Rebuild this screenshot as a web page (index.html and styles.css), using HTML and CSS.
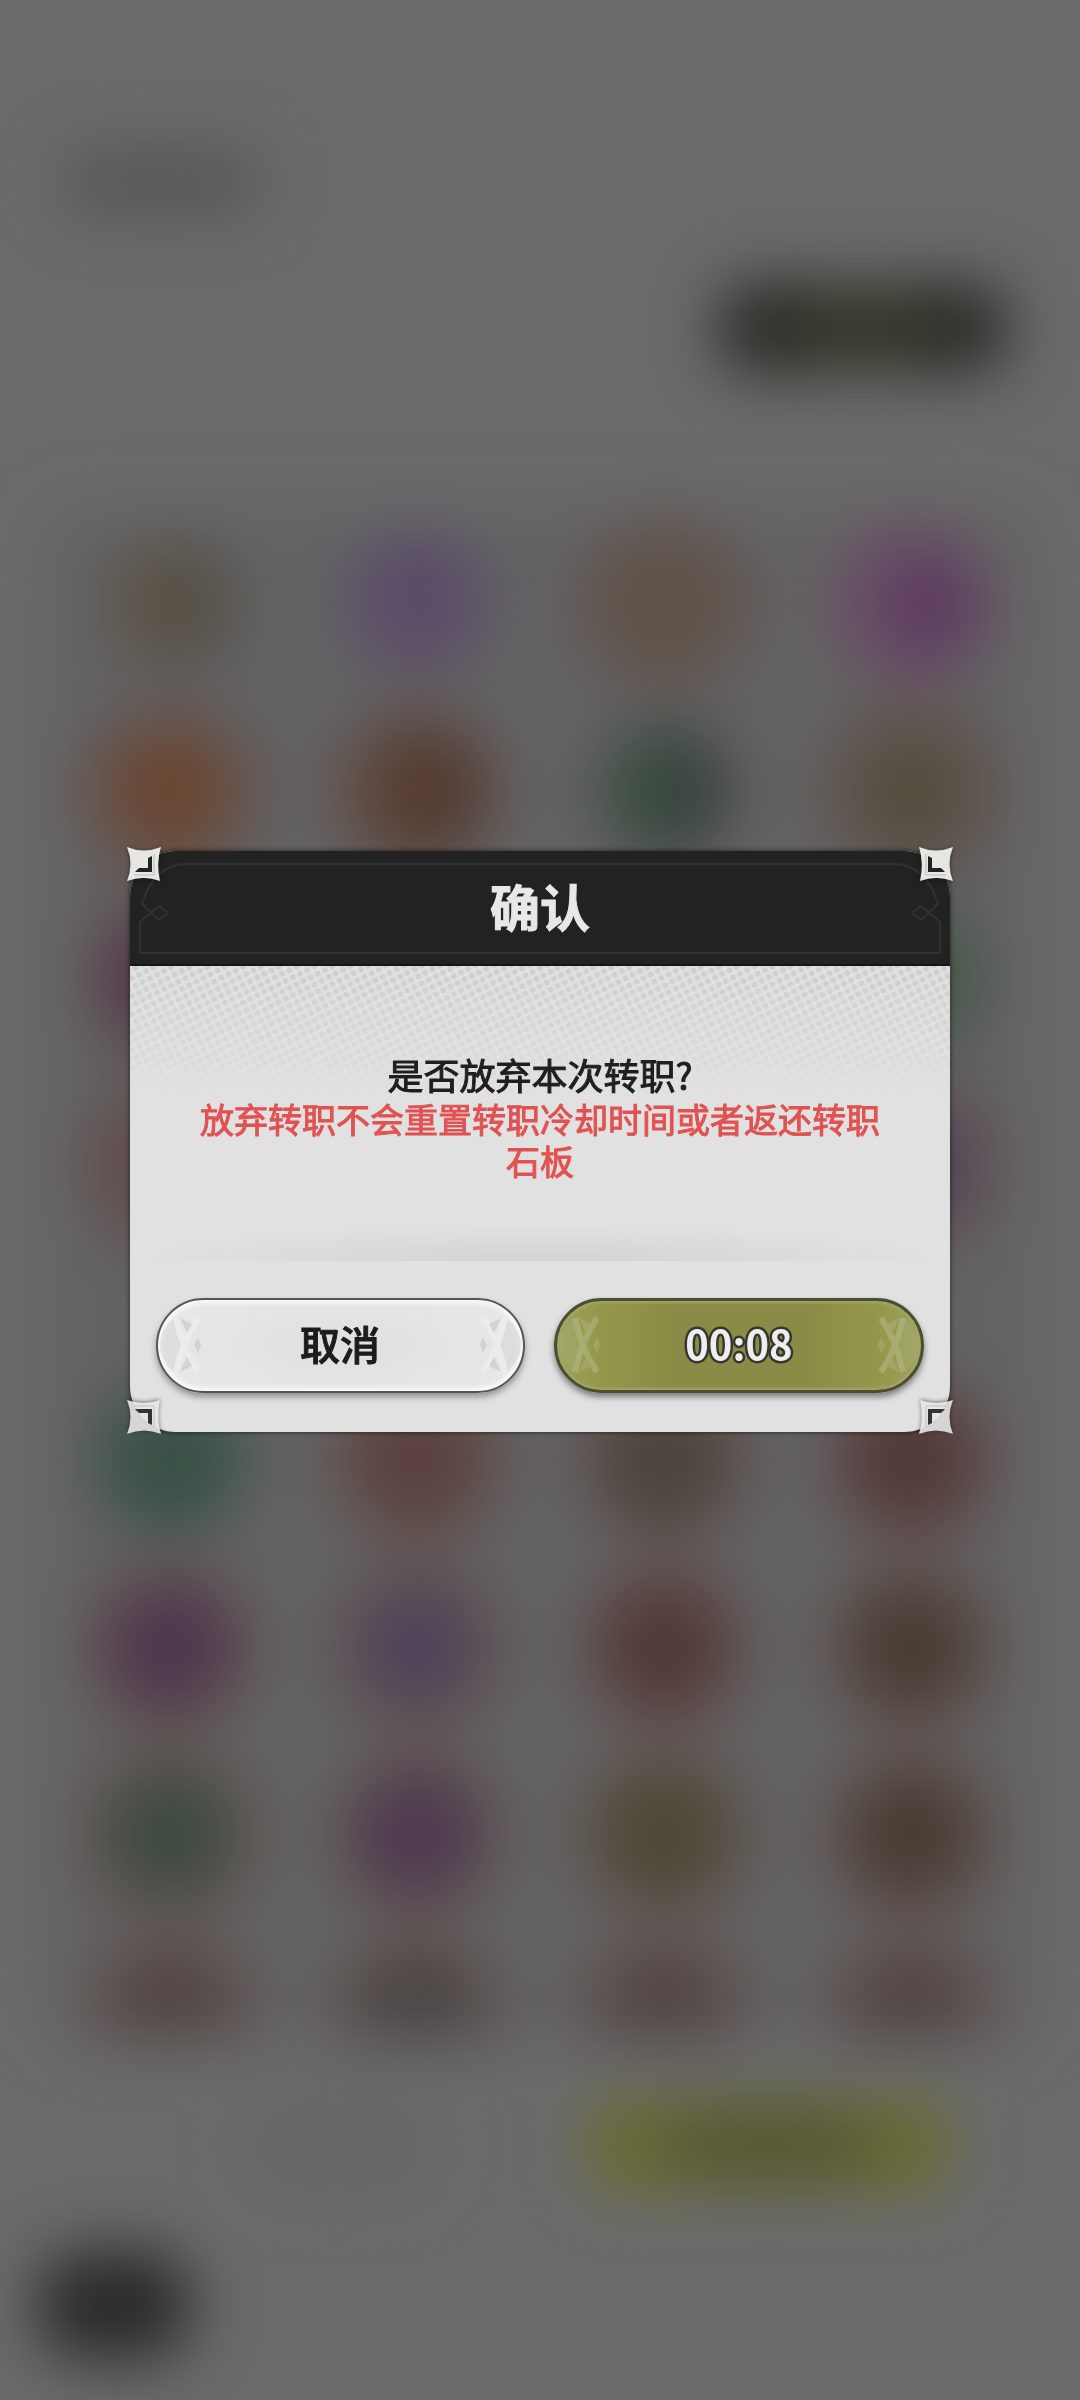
FILE: index.html
```html
<!DOCTYPE html>
<html lang="zh-CN">
<head>
    <meta charset="UTF-8">
    <meta name="viewport" content="width=device-width, initial-scale=1.0">
    <title>确认</title>
    <link rel="stylesheet" href="styles.css">
</head>
<body>
    <!-- blurred page behind the dialog -->
    <div class="scene" aria-hidden="true">
        <div class="scene-title"></div>
        <div class="scene-pill"></div>

        <div class="orb-panel">
            <div class="orb-grid">
                <div class="orb tan"></div>
                <div class="orb violet"></div>
                <div class="orb sand"></div>
                <div class="orb magenta"></div>
                <div class="orb orange"></div>
                <div class="orb rust"></div>
                <div class="orb pine"></div>
                <div class="orb olive"></div>
                <div class="orb plum"></div>
                <div class="orb brown"></div>
                <div class="orb brown"></div>
                <div class="orb jade"></div>
                <div class="orb rose"></div>
                <div class="orb brown"></div>
                <div class="orb brown"></div>
                <div class="orb iris"></div>
            </div>
            <div class="orb-grid clipped">
                <div class="orb green"></div>
                <div class="orb red"></div>
                <div class="orb brown"></div>
                <div class="orb wine"></div>
                <div class="orb plum"></div>
                <div class="orb iris"></div>
                <div class="orb wine"></div>
                <div class="orb bark"></div>
                <div class="orb moss"></div>
                <div class="orb grape"></div>
                <div class="orb olive-dark"></div>
                <div class="orb bark"></div>
                <div class="orb clay"></div>
                <div class="orb ash"></div>
                <div class="orb clay"></div>
                <div class="orb clay"></div>
            </div>
        </div>

        <div class="scene-actions">
            <div class="scene-ghost"></div>
            <div class="scene-lime"></div>
        </div>
        <div class="scene-back"></div>
    </div>

    <svg class="defs" aria-hidden="true">
        <symbol id="corner" viewBox="0 0 34 34">
            <path class="star" d="M0 0 Q17 7 34 0 Q29 16 33 34 Q17 28 0 34 Q7 17 0 0Z"/>
            <path class="star-line" d="M27 7 L27 28 L7 28"/>
            <path class="star-mark" d="M25 9 L25 25 L8 25 L12 21 L21 21 L21 11Z"/>
        </symbol>
        <symbol id="frame-end" viewBox="0 0 52 91">
            <path class="frame-line" d="M52 1 L46 1 Q15 2 3 41 L20 57 L29 50 L20 43 L1 59 L1 90 L52 90"/>
        </symbol>
        <symbol id="facet" viewBox="0 0 44 62">
            <path class="facet-end" d="M16 4 Q2 16 2 31 Q2 46 16 58 L25 31Z"/>
            <path class="facet-cross" d="M18 4 Q24 34 40 58 M18 58 Q24 28 40 4"/>
            <path class="facet-chip" d="M22 4 L34 10 L29 19Z M22 58 L34 52 L29 43Z M36 31 L40 23 L43 31 L40 39Z"/>
        </symbol>
    </svg>

    <div class="overlay">
        <div class="dialog" role="dialog" aria-modal="true" aria-labelledby="dialog-title">
            <div class="dialog-header">
                <div class="frame">
                    <svg class="frame-end"><use href="#frame-end"/></svg>
                    <div class="frame-mid"></div>
                    <svg class="frame-end flip"><use href="#frame-end"/></svg>
                </div>
                <h1 id="dialog-title">确认</h1>
            </div>

            <div class="dialog-body">
                <svg class="halftone" aria-hidden="true">
                    <pattern id="dots" width="8" height="8" patternUnits="userSpaceOnUse" patternTransform="rotate(-27)">
                        <circle cx="4" cy="4" r="3"/>
                    </pattern>
                    <rect width="100%" height="100%" fill="url(#dots)"/>
                </svg>
                <p class="question">是否放弃本次转职?</p>
                <p class="warning">放弃转职不会重置转职冷却时间或者返还转职石板</p>
            </div>

            <div class="dialog-footer">
                <button type="button" class="btn cancel">
                    <svg class="facet"><use href="#facet"/></svg>
                    <span>取消</span>
                    <svg class="facet flip"><use href="#facet"/></svg>
                </button>
                <button type="button" class="btn confirm">
                    <svg class="facet"><use href="#facet"/></svg>
                    <span>00:08</span>
                    <svg class="facet flip"><use href="#facet"/></svg>
                </button>
            </div>

            <svg class="corner top-left"><use href="#corner"/></svg>
            <svg class="corner top-right"><use href="#corner"/></svg>
            <svg class="corner bottom-left"><use href="#corner"/></svg>
            <svg class="corner bottom-right"><use href="#corner"/></svg>
        </div>
    </div>
</body>
</html>
```
FILE: styles.css
```css
* {
    box-sizing: border-box;
}

body {
    margin: 0;
    min-height: 100vh;
    overflow-x: hidden;
    background: #6a6a6a;
    font-family: "Noto Sans CJK SC", "Noto Sans", sans-serif;
}

/* Background page */
.scene {
    padding: 152px 46px 50px;
    filter: blur(30px);
}

.scene-title {
    width: 190px;
    height: 60px;
    margin-left: 20px;
    border-radius: 20px;
    background: #565656;
}

.scene-pill {
    width: 290px;
    height: 92px;
    margin: 70px 26px 0 auto;
    border-radius: 42px;
    background: linear-gradient(to right, #252525, #3a392c 50%, #252525);
}

.orb-panel {
    margin-top: 136px;
    border-radius: 40px;
    background: #636363;
}

.orb-grid {
    display: grid;
    grid-template-columns: repeat(4, 1fr);
    grid-auto-rows: 187px;
    place-items: center;
}

.orb-grid.clipped {
    height: 670px;
    margin-top: 108px;
    overflow: hidden;
}

.orb {
    width: 126px;
    height: 126px;
    border-radius: 50%;
    box-shadow: 0 0 0 30px #625654;
}

.tan { background: linear-gradient(to right, #60564a, #504b42); box-shadow: none; }
.violet { background: linear-gradient(#59486a, #5d4d68); box-shadow: 0 0 0 16px #605b66; }
.sand { background: #5e5347; }
.magenta { background: linear-gradient(to right, #6b4d66, #573360); box-shadow: 0 0 0 24px #685664; }
.orange { background: #6c4733; }
.rust { background: linear-gradient(to right, #5f4739, #4c3229); }
.pine { background: linear-gradient(to right, #3f5446, #323c38); box-shadow: 0 0 0 14px #5b5855; }
.olive { background: #564e40; }
.plum { background: #4e364e; }
.brown { background: #4b433c; }
.jade { background: #465749; box-shadow: 0 0 0 16px #535a55; }
.rose { background: #5f4b4a; }
.moss { background: #3e4a3f; }
.iris { background: #514359; }
.green { background: #385145; box-shadow: 0 0 0 20px #505a56; }
.red { background: #5a403e; }
.wine { background: #523838; }
.bark { background: #493c34; }
.grape { background: #4d3a50; }
.olive-dark { background: #4e4735; }
.clay { background: #504442; }
.ash { background: #484341; }

.scene-actions {
    display: flex;
    gap: 150px;
    margin: 62px 80px 0 200px;
}

.scene-ghost {
    flex: 1;
    height: 94px;
    border-radius: 45px;
    background: #666663;
}

.scene-lime {
    flex: 2;
    height: 94px;
    border-radius: 45px;
    background: radial-gradient(#505230 30%, #6c6d34 60%);
}

.scene-back {
    width: 156px;
    height: 110px;
    margin-top: 58px;
    margin-left: -10px;
    border-radius: 50px;
    background: #2b2b2b;
}

/* Dialog */
.defs {
    position: absolute;
    width: 0;
    height: 0;
}

.overlay {
    position: fixed;
    inset: 0;
    display: flex;
    align-items: center;
    justify-content: center;
    padding-bottom: 118px;
}

.dialog {
    position: relative;
    width: 76%;
    border-radius: 46px;
    background: #e1e1e1;
    box-shadow: 0 0 4px 1px rgba(0, 0, 0, 0.45);
}

.dialog-header {
    position: relative;
    display: flex;
    align-items: center;
    justify-content: center;
    height: 115px;
    padding-bottom: 4px;
    border-bottom: 2px solid #161616;
    border-radius: 46px 46px 0 0;
    background: #222;
}

.dialog-header h1 {
    margin: 0;
    color: #e8e8e8;
    font-size: 50px;
    font-weight: 700;
    line-height: 60px;
    -webkit-text-stroke: 1px #e8e8e8;
}

.frame {
    position: absolute;
    inset: 12px 9px 10px;
    display: flex;
}

.frame-end {
    width: 52px;
    height: 91px;
}

.frame-mid {
    flex: 1;
    height: 91px;
    border: solid #313131;
    border-width: 2px 0;
}

.frame-line {
    fill: none;
    stroke: #313131;
    stroke-width: 2;
}

.flip {
    transform: scaleX(-1);
}

.dialog-body {
    position: relative;
    height: 295px;
    padding: 84px 68px 0;
    background: radial-gradient(ellipse 50% 36px at 50% 100%, #d3d3d3, #e1e1e1);
    text-align: center;
}

.dialog-body p {
    position: relative;
    margin: 0;
    -webkit-text-stroke: 1px currentColor;
}

.halftone {
    position: absolute;
    top: 0;
    left: 0;
    width: 100%;
    height: 130px;
    fill: #cecece;
    -webkit-mask-image: linear-gradient(#000, transparent);
    mask-image: linear-gradient(#000, transparent);
}

.question {
    color: #1f1f1f;
    font-size: 36px;
    line-height: 48px;
}

.warning {
    color: #e05353;
    font-size: 34px;
    line-height: 42px;
}

.dialog-footer {
    display: flex;
    gap: 29px;
    padding: 37px 26px 39px;
}

.btn {
    flex: 1;
    display: flex;
    align-items: center;
    justify-content: space-between;
    height: 95px;
    padding: 0;
    border-radius: 48px;
    font-family: inherit;
    font-size: 40px;
    font-weight: 500;
    line-height: 50px;
    cursor: pointer;
}

.btn span {
    padding-bottom: 5px;
}

.cancel {
    border: 2px solid #555;
    background: radial-gradient(ellipse 60% 80%, #dfdfdf, #e9e9e9);
    box-shadow: inset 0 0 5px 3px #fbfbfb, 0 4px 6px rgba(0, 0, 0, 0.35);
    color: #1c1c1c;
}

.cancel span {
    -webkit-text-stroke: 1px #1c1c1c;
}

.confirm {
    border: 3px solid #4c4d31;
    background: linear-gradient(to right, #9fa35c, #93974a 12%, #8a8b46 32%, #8a8b46 68%, #93974a 88%, #9fa35c);
    box-shadow: inset 0 0 3px 2px #a4a76a, 0 4px 6px rgba(0, 0, 0, 0.45);
    color: #eee;
}

.confirm span {
    font-weight: 700;
    paint-order: stroke fill;
    -webkit-text-stroke: 5px #37372f;
}

.facet {
    width: 44px;
    height: 62px;
}

.facet-end,
.facet-chip {
    fill: #d3d3d3;
}

.facet-end {
    opacity: 0.5;
}

.facet-cross {
    fill: none;
    stroke: #ececec;
    stroke-width: 6;
}

/* the cross is drawn in the light grey of the cancel button, so keep it faint here */
.confirm .facet {
    opacity: 0.2;
}

.corner {
    position: absolute;
    width: 34px;
    height: 34px;
    filter: drop-shadow(0 1px 2px rgba(0, 0, 0, 0.5));
}

.star {
    fill: #e6e6e4;
}

.star-line {
    fill: none;
    stroke: #bdbdbb;
    stroke-width: 1;
}

.star-mark {
    fill: #222;
}

.bottom-left,
.bottom-right {
    opacity: 0.9;
}

.top-left {
    top: -4px;
    left: -3px;
}

.top-right {
    top: -4px;
    right: -3px;
    transform: scaleX(-1);
}

.bottom-left {
    bottom: -2px;
    left: -3px;
    transform: scaleY(-1);
}

.bottom-right {
    right: -3px;
    bottom: -2px;
    transform: scale(-1);
}
```
